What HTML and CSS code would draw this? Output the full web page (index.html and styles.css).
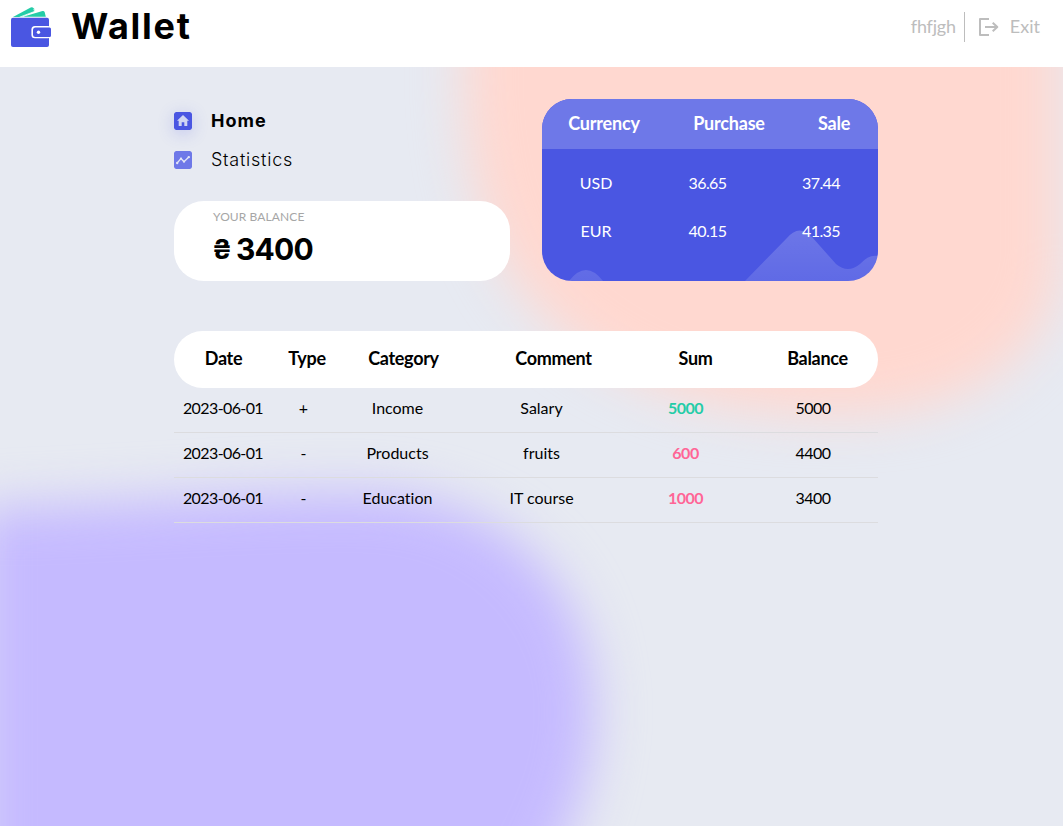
FILE: index.html
```html
<!DOCTYPE html>
<html lang="en">
<head>
<meta charset="utf-8">
<title>Wallet</title>
<link rel="stylesheet" href="styles.css">
</head>
<body>
<svg class="backdrop" viewBox="0 0 1063 826" aria-hidden="true">
  <defs>
    <filter id="soft" x="-20%" y="-20%" width="140%" height="140%" color-interpolation-filters="sRGB"><feGaussianBlur stdDeviation="25"/></filter>
  </defs>
  <g filter="url(#soft)">
    <path d="M464 -80 H1060 V260 C1060 350 970 415 850 415 C730 415 640 395 560 330 C490 275 464 180 464 80 Z" fill="#ffd8d0"/>
    <path d="M-22 508 C120 504 230 493 360 493 C510 493 594 590 594 710 C594 780 570 840 520 920 H-22 Z" fill="#c5baff"/>
  </g>
</svg>
<header class="header">
  <div class="brand">
    <svg class="brand-icon" viewBox="0 0 40 40">
      <path d="M2 10 19.700.4Q21.500-.4 22.600 1.300L24 4.300 10 10Z" fill="#24cca7"/>
      <path d="M8.500 10.200 24 4.300 22.500 2.500" fill="none" stroke="#fff" stroke-width=".8"/>
      <path d="M12 9.700 31.500 4Q33 3.600 33.600 5L34.800 9.700Z" fill="#24cca7"/>
      <rect y="10.700" width="38" height="29.300" rx="2" fill="#4a56e2"/>
      <rect x="20.400" y="18.900" width="20" height="12.400" rx="3.500" fill="#fff"/>
      <path d="M24.500 20.500H38.500Q40 20.500 40 22V28.500Q40 30 38.500 30H24.500Q22 30 22 27.500V23Q22 20.500 24.500 20.500Z" fill="#4a56e2"/>
      <circle cx="27.500" cy="25.300" r="1.700" fill="#fff"/>
    </svg>
    <span class="brand-name">Wallet</span>
  </div>
  <div class="user">
    <span class="user-name">fhfjgh</span>
    <button class="exit" type="button">
      <svg class="exit-icon" viewBox="0 0 20 18">
        <path d="M10 1H1V17H10M6 9H18M13.700 4.700 18.300 9 13.700 13.300" fill="none" stroke="#bdbdbd" stroke-width="2" stroke-linejoin="round"/>
      </svg>
      <span class="exit-label">Exit</span>
    </button>
  </div>
</header>
<main class="main">
  <section class="overview">
    <div class="side">
      <nav class="nav">
        <a class="nav-item nav-active">
          <svg class="nav-icon" viewBox="0 0 18 18"><rect width="18" height="18" rx="2" fill="#4a56e2"/><path d="M9 3 3 8.800H4.700V14H7.700V10.300H10.300V14H13.300V8.800H15Z" fill="#d0d5f3"/></svg>
          <span class="nav-home">Home</span>
        </a>
        <a class="nav-item">
          <svg class="nav-icon" viewBox="0 0 18 18"><rect width="18" height="18" rx="2" fill="#6e78e8"/><path d="M3 12.200 7 7.500 10 10.800 14.800 6" fill="none" stroke="#e3e5f6" stroke-width="1.300"/><g fill="#e3e5f6"><circle cx="3.200" cy="12" r="1.200"/><circle cx="7" cy="7.600" r="1.100"/><circle cx="10" cy="10.600" r="1.100"/><circle cx="14.800" cy="6.100" r="1.200"/></g></svg>
          <span class="nav-stats">Statistics</span>
        </a>
      </nav>
      <div class="balance">
        <div class="balance-label">YOUR BALANCE</div>
        <div class="balance-value"><span class="hryvnia">₴</span><span>3400</span></div>
      </div>
    </div>
    <div class="rates">
      <svg class="rates-wave" viewBox="0 0 336 182">
        <defs><linearGradient id="wave" x2="0" y2="1"><stop stop-color="#fff" stop-opacity=".19"/><stop offset="1" stop-color="#fff" stop-opacity=".12"/></linearGradient></defs>
        <path d="M203 182 244 140Q257 124 270 138L294 165Q306 175 318 165Q327 155 336 157V182ZM27 182Q44 160 61 182Z" fill="url(#wave)"/>
      </svg>
      <div class="rates-head"><span>Currency</span><span>Purchase</span><span>Sale</span></div>
      <div class="rates-row"><span>USD</span><span class="num">36.65</span><span class="num">37.44</span></div>
      <div class="rates-row"><span>EUR</span><span class="num">40.15</span><span class="num">41.35</span></div>
    </div>
  </section>
  <section class="ledger">
    <div class="ledger-head"><span>Date</span><span>Type</span><span>Category</span><span>Comment</span><span>Sum</span><span>Balance</span></div>
    <div class="ledger-row"><span class="num">2023-06-01</span><span>+</span><span>Income</span><span>Salary</span><span class="sum income">5000</span><span class="total">5000</span></div>
    <div class="ledger-row"><span class="num">2023-06-01</span><span>-</span><span>Products</span><span>fruits</span><span class="sum expense">600</span><span class="total">4400</span></div>
    <div class="ledger-row"><span class="num">2023-06-01</span><span>-</span><span>Education</span><span>IT course</span><span class="sum expense">1000</span><span class="total">3400</span></div>
  </section>
</main>
</body>
</html>
```
FILE: styles.css
```css
* { box-sizing: border-box; }
body {
  margin: 0;
  height: 826px;
  overflow: hidden;
  background: #e7eaf2;
  color: #000;
  font-family: Lato, sans-serif;
  font-size: 16px;
  font-variant-ligatures: none;
}
.backdrop { position: absolute; inset: 0; width: 1063px; height: 826px; z-index: -1; }
.header {
  display: flex;
  justify-content: space-between;
  height: 67px;
  padding: 7px 23px 0 11px;
  background: #fff;
}
.brand { display: flex; gap: 20px; }
.brand-icon { width: 40px; height: 40px; overflow: visible; }
.brand-name { font: 700 36px/38px Inter, sans-serif; letter-spacing: 1.7px; }
.user { display: flex; align-items: center; height: 30px; margin-top: 5px; color: #bdbdbd; font-size: 18px; }
.user-name { padding-right: 8px; line-height: 28px; height: 30px; letter-spacing: -.2px; border-right: 1px solid #bdbdbd; }
.exit { display: flex; align-items: center; gap: 11px; padding: 0 0 0 14px; border: 0; background: none; color: inherit; font: inherit; }
.exit-icon { width: 20px; height: 18px; }
.exit-label { line-height: 20px; padding-bottom: 2px; }
.main { width: 704px; margin: 32px 0 0 174px; }
.overview { display: grid; grid-template-columns: 336px 336px; gap: 32px; height: 182px; }
.nav { display: flex; flex-direction: column; gap: 12px; padding-top: 8px; height: 102px; }
.nav-item { display: flex; align-items: center; gap: 19px; height: 27px; font: 300 18px/27px Inter, sans-serif; }
.nav-icon { width: 18px; height: 18px; border-radius: 2px; }
.nav-active { font-weight: 700; }
.nav-home { letter-spacing: 1px; }
.nav-stats { letter-spacing: .75px; }
.nav-active .nav-icon { box-shadow: 0 3px 16px rgba(74, 86, 226, .25); }
.balance { height: 80px; padding: 7px 0 0 39px; border-radius: 30px; background: #fff; }
.balance-label { color: #a6a6a6; font-size: 12px; line-height: 18px; letter-spacing: .1px; }
.balance-value { display: flex; align-items: center; gap: 7px; padding-top: 1px; font: 700 30px/45px Inter, sans-serif; letter-spacing: -.8px; }
.hryvnia { width: 17px; margin-left: -1px; font-size: 27px; letter-spacing: 0; }
.rates { position: relative; overflow: hidden; border-radius: 30px; background: #4a56e2; color: #fff; text-align: center; }
.rates-wave { position: absolute; left: 0; top: 0; width: 336px; height: 182px; }
.rates-head { position: relative; display: grid; grid-template-columns: 124px 126px 84px; height: 50px; margin-bottom: 11px; background: #6e78e8; font-weight: 700; font-size: 18px; line-height: 49px; letter-spacing: -.2px; }
.rates-row { position: relative; display: grid; grid-template-columns: 108px 115px 112px; height: 48px; line-height: 46px; }
.num { letter-spacing: -.6px; }
.ledger { margin-top: 50px; text-align: center; }
.ledger-head { display: grid; grid-template-columns: 99px 68px 125px 175px 109px 128px; height: 57px; border-radius: 30px; background: #fff; font-weight: 700; font-size: 18px; line-height: 55px; letter-spacing: -.3px; }
.ledger-head span:last-child { padding-left: 7px; }
.ledger-row { display: grid; grid-template-columns: 98px 63px 125px 163px 125px 130px; height: 45px; border-bottom: 1px solid #dcdcdf; line-height: 39px; }
.sum { font-weight: 700; letter-spacing: -.5px; }
.total { letter-spacing: -.5px; }
.income { color: #24cca7; }
.expense { color: #ff6596; }
```
